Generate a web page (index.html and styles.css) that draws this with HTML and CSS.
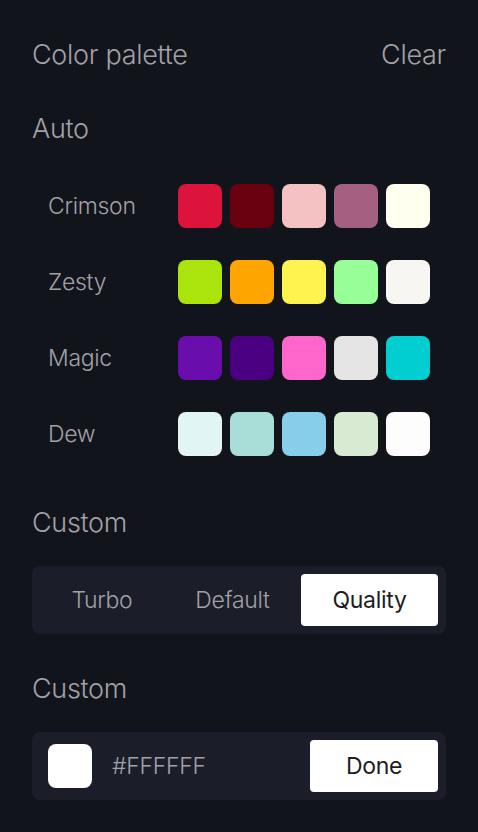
FILE: index.html
```html
<!DOCTYPE html>
<html lang="en">
  <head>
    <meta charset="UTF-8" />
    <title>Color palette</title>
    <link rel="stylesheet" href="styles.css">
  </head>
  <body>
    <div class="panel">
      <div class="header">
        <span>Color palette</span>
        <span>Clear</span>
      </div>
      <h2 class="title auto">Auto</h2>
      <div class="palettes">
        <div class="row">
          <span class="name">Crimson</span>
          <div class="swatches">
            <span class="sw c1"></span><span class="sw c2"></span><span class="sw c3"></span><span class="sw c4"></span><span class="sw c5"></span>
          </div>
        </div>
        <div class="row">
          <span class="name">Zesty</span>
          <div class="swatches">
            <span class="sw z1"></span><span class="sw z2"></span><span class="sw z3"></span><span class="sw z4"></span><span class="sw z5"></span>
          </div>
        </div>
        <div class="row">
          <span class="name">Magic</span>
          <div class="swatches">
            <span class="sw m1"></span><span class="sw m2"></span><span class="sw m3"></span><span class="sw m4"></span><span class="sw m5"></span>
          </div>
        </div>
        <div class="row">
          <span class="name">Dew</span>
          <div class="swatches">
            <span class="sw d1"></span><span class="sw d2"></span><span class="sw d3"></span><span class="sw d4"></span><span class="sw d5"></span>
          </div>
        </div>
      </div>
      <h2 class="title custom1">Custom</h2>
      <div class="segment">
        <button>Turbo</button>
        <button>Default</button>
        <button class="active">Quality</button>
      </div>
      <h2 class="title custom2">Custom</h2>
      <div class="picker">
        <span class="preview"></span>
        <span class="hex">#FFFFFF</span>
        <button class="done">Done</button>
      </div>
    </div>
  </body>
</html>
```

FILE: styles.css
```css
*{
    margin: 0;
    padding: 0;
    box-sizing: border-box;
}
body{
    background: #12141c;
    font-family: Inter, "Noto Sans", sans-serif;
    font-weight: 300;
    letter-spacing: -0.3px;
    color: #a1a1a6;
}
.panel{
    padding: 39px 32px 0 32px;
}
.header{
    display: flex;
    justify-content: space-between;
    font-size: 27px;
    line-height: 32px;
}
.title{
    font-size: 27px;
    font-weight: 300;
    line-height: 32px;
}
.auto{
    margin-top: 42px;
}
.palettes{
    display: flex;
    flex-direction: column;
    gap: 32px;
    margin-top: 39px;
}
.row{
    display: flex;
    align-items: center;
    padding-left: 16px;
}
.name{
    width: 130px;
    font-size: 23px;
}
.swatches{
    display: flex;
    gap: 8px;
}
.sw{
    width: 44px;
    height: 44px;
    border-radius: 8px;
}
.c1{ background: #dc143c; }
.c2{ background: #690010; }
.c3{ background: #f4c2c2; }
.c4{ background: #a3607f; }
.c5{ background: #fffff0; }
.z1{ background: #abe30c; }
.z2{ background: #ffa500; }
.z3{ background: #fff44f; }
.z4{ background: #98ff98; }
.z5{ background: #f8f6f2; }
.m1{ background: #6a0dad; }
.m2{ background: #4b0082; }
.m3{ background: #ff66cc; }
.m4{ background: #e5e5e5; }
.m5{ background: #00ced1; }
.d1{ background: #e1f5f4; }
.d2{ background: #a9ddd8; }
.d3{ background: #87ceeb; }
.d4{ background: #d9ead3; }
.d5{ background: #fdfdfd; }
.custom1{
    margin-top: 51px;
}
.segment{
    display: flex;
    margin-top: 27px;
    padding: 8px;
    background: #1b1e29;
    border-radius: 8px;
}
.segment button{
    flex: auto;
    height: 52px;
    border: none;
    border-radius: 4px;
    background: none;
    font-family: inherit;
    font-weight: 300;
    letter-spacing: -0.3px;
    font-size: 23px;
    color: #a1a1a6;
}
.segment .active{
    background: #fff;
    color: #1d1d22;
    font-weight: 400;
}
.custom2{
    margin-top: 39px;
}
.picker{
    display: flex;
    align-items: center;
    margin-top: 27px;
    height: 68px;
    padding: 0 8px 0 16px;
    background: #1b1e29;
    border-radius: 8px;
}
.preview{
    width: 44px;
    height: 44px;
    border-radius: 8px;
    background: #fff;
}
.hex{
    margin-left: 20px;
    font-size: 23px;
    flex: 1;
}
.done{
    width: 128px;
    height: 52px;
    border: none;
    border-radius: 4px;
    background: #fff;
    font-family: inherit;
    font-weight: 400;
    letter-spacing: -0.3px;
    font-size: 23px;
    color: #1d1d22;
}
```
